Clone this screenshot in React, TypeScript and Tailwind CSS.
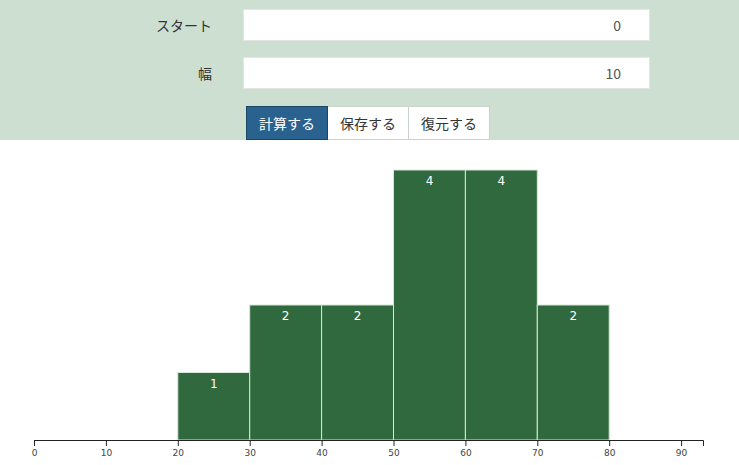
import React from "react";

const bins = [
  { x0: 20, x1: 30, n: 1 },
  { x0: 30, x1: 40, n: 2 },
  { x0: 40, x1: 50, n: 2 },
  { x0: 50, x1: 60, n: 4 },
  { x0: 60, x1: 70, n: 4 },
  { x0: 70, x1: 80, n: 2 },
];

const sx = (v: number) => 34 + v * 7.19;
const baseY = 300;
const unit = 67.5;

function Chart() {
  const ticks = [0, 10, 20, 30, 40, 50, 60, 70, 80, 90];
  return (
    <svg width={739} height={325} className="block">
      {bins.map((b) => {
        const x = sx(b.x0);
        const w = sx(b.x1) - sx(b.x0);
        const h = b.n * unit;
        return (
          <g key={b.x0}>
            <rect x={x} y={baseY - h} width={w} height={h} fill="#30693e" stroke="#d6e8d6" strokeWidth={1} />
            <text
              x={x + w / 2}
              y={baseY - h + 15}
              textAnchor="middle"
              fill="#ffffff"
              fontSize={12}
              fontFamily="'DejaVu Sans', Verdana, sans-serif"
            >
              {b.n}
            </text>
          </g>
        );
      })}
      <path d={`M34.5,306V300.5H703.5V306`} fill="none" stroke="#222" strokeWidth={1} />
      {ticks.map((t) => (
        <g key={t}>
          <line x1={sx(t) + 0.5} x2={sx(t) + 0.5} y1={300} y2={306} stroke="#222" />
          <text
            x={sx(t) + 0.5}
            y={316}
            textAnchor="middle"
            fill="#444"
            fontSize={9}
            fontFamily="'DejaVu Sans', Verdana, sans-serif"
          >
            {t}
          </text>
        </g>
      ))}
    </svg>
  );
}

export default function App() {
  const jp = { fontFamily: "'Noto Sans CJK JP', 'Noto Sans', sans-serif" };
  return (
    <div className="w-[739px] h-[465px] bg-white overflow-hidden" style={jp}>
      <div className="bg-[#cddfd1] h-[140px] pt-[9px] flex flex-col">
        <div className="flex items-center h-[32px]">
          <div className="w-[212px] text-right text-[14px] text-[#333]">スタート</div>
          <div className="ml-[31px] w-[407px] h-[32px] bg-white border border-[#e2e6e2] flex items-center justify-end pr-[28px] text-[14px] text-[#555]">
            0
          </div>
        </div>
        <div className="flex items-center h-[32px] mt-[16px]">
          <div className="w-[212px] text-right text-[14px] text-[#333]">幅</div>
          <div className="ml-[31px] w-[407px] h-[32px] bg-white border border-[#e2e6e2] flex items-center justify-end pr-[28px] text-[14px] text-[#555]">
            10
          </div>
        </div>
        <div className="flex ml-[246px] mt-[17px] h-[34px]">
          <div className="w-[82px] h-full bg-[#29628f] border border-[#1b4666] text-white text-[14px] flex items-center justify-center">
            計算する
          </div>
          <div className="w-[81px] h-full bg-white border border-[#ccd2cc] border-l-0 text-[#333] text-[14px] flex items-center justify-center">
            保存する
          </div>
          <div className="w-[81px] h-full bg-white border border-[#ccd2cc] border-l-0 text-[#333] text-[14px] flex items-center justify-center">
            復元する
          </div>
        </div>
      </div>
      <Chart />
    </div>
  );
}
